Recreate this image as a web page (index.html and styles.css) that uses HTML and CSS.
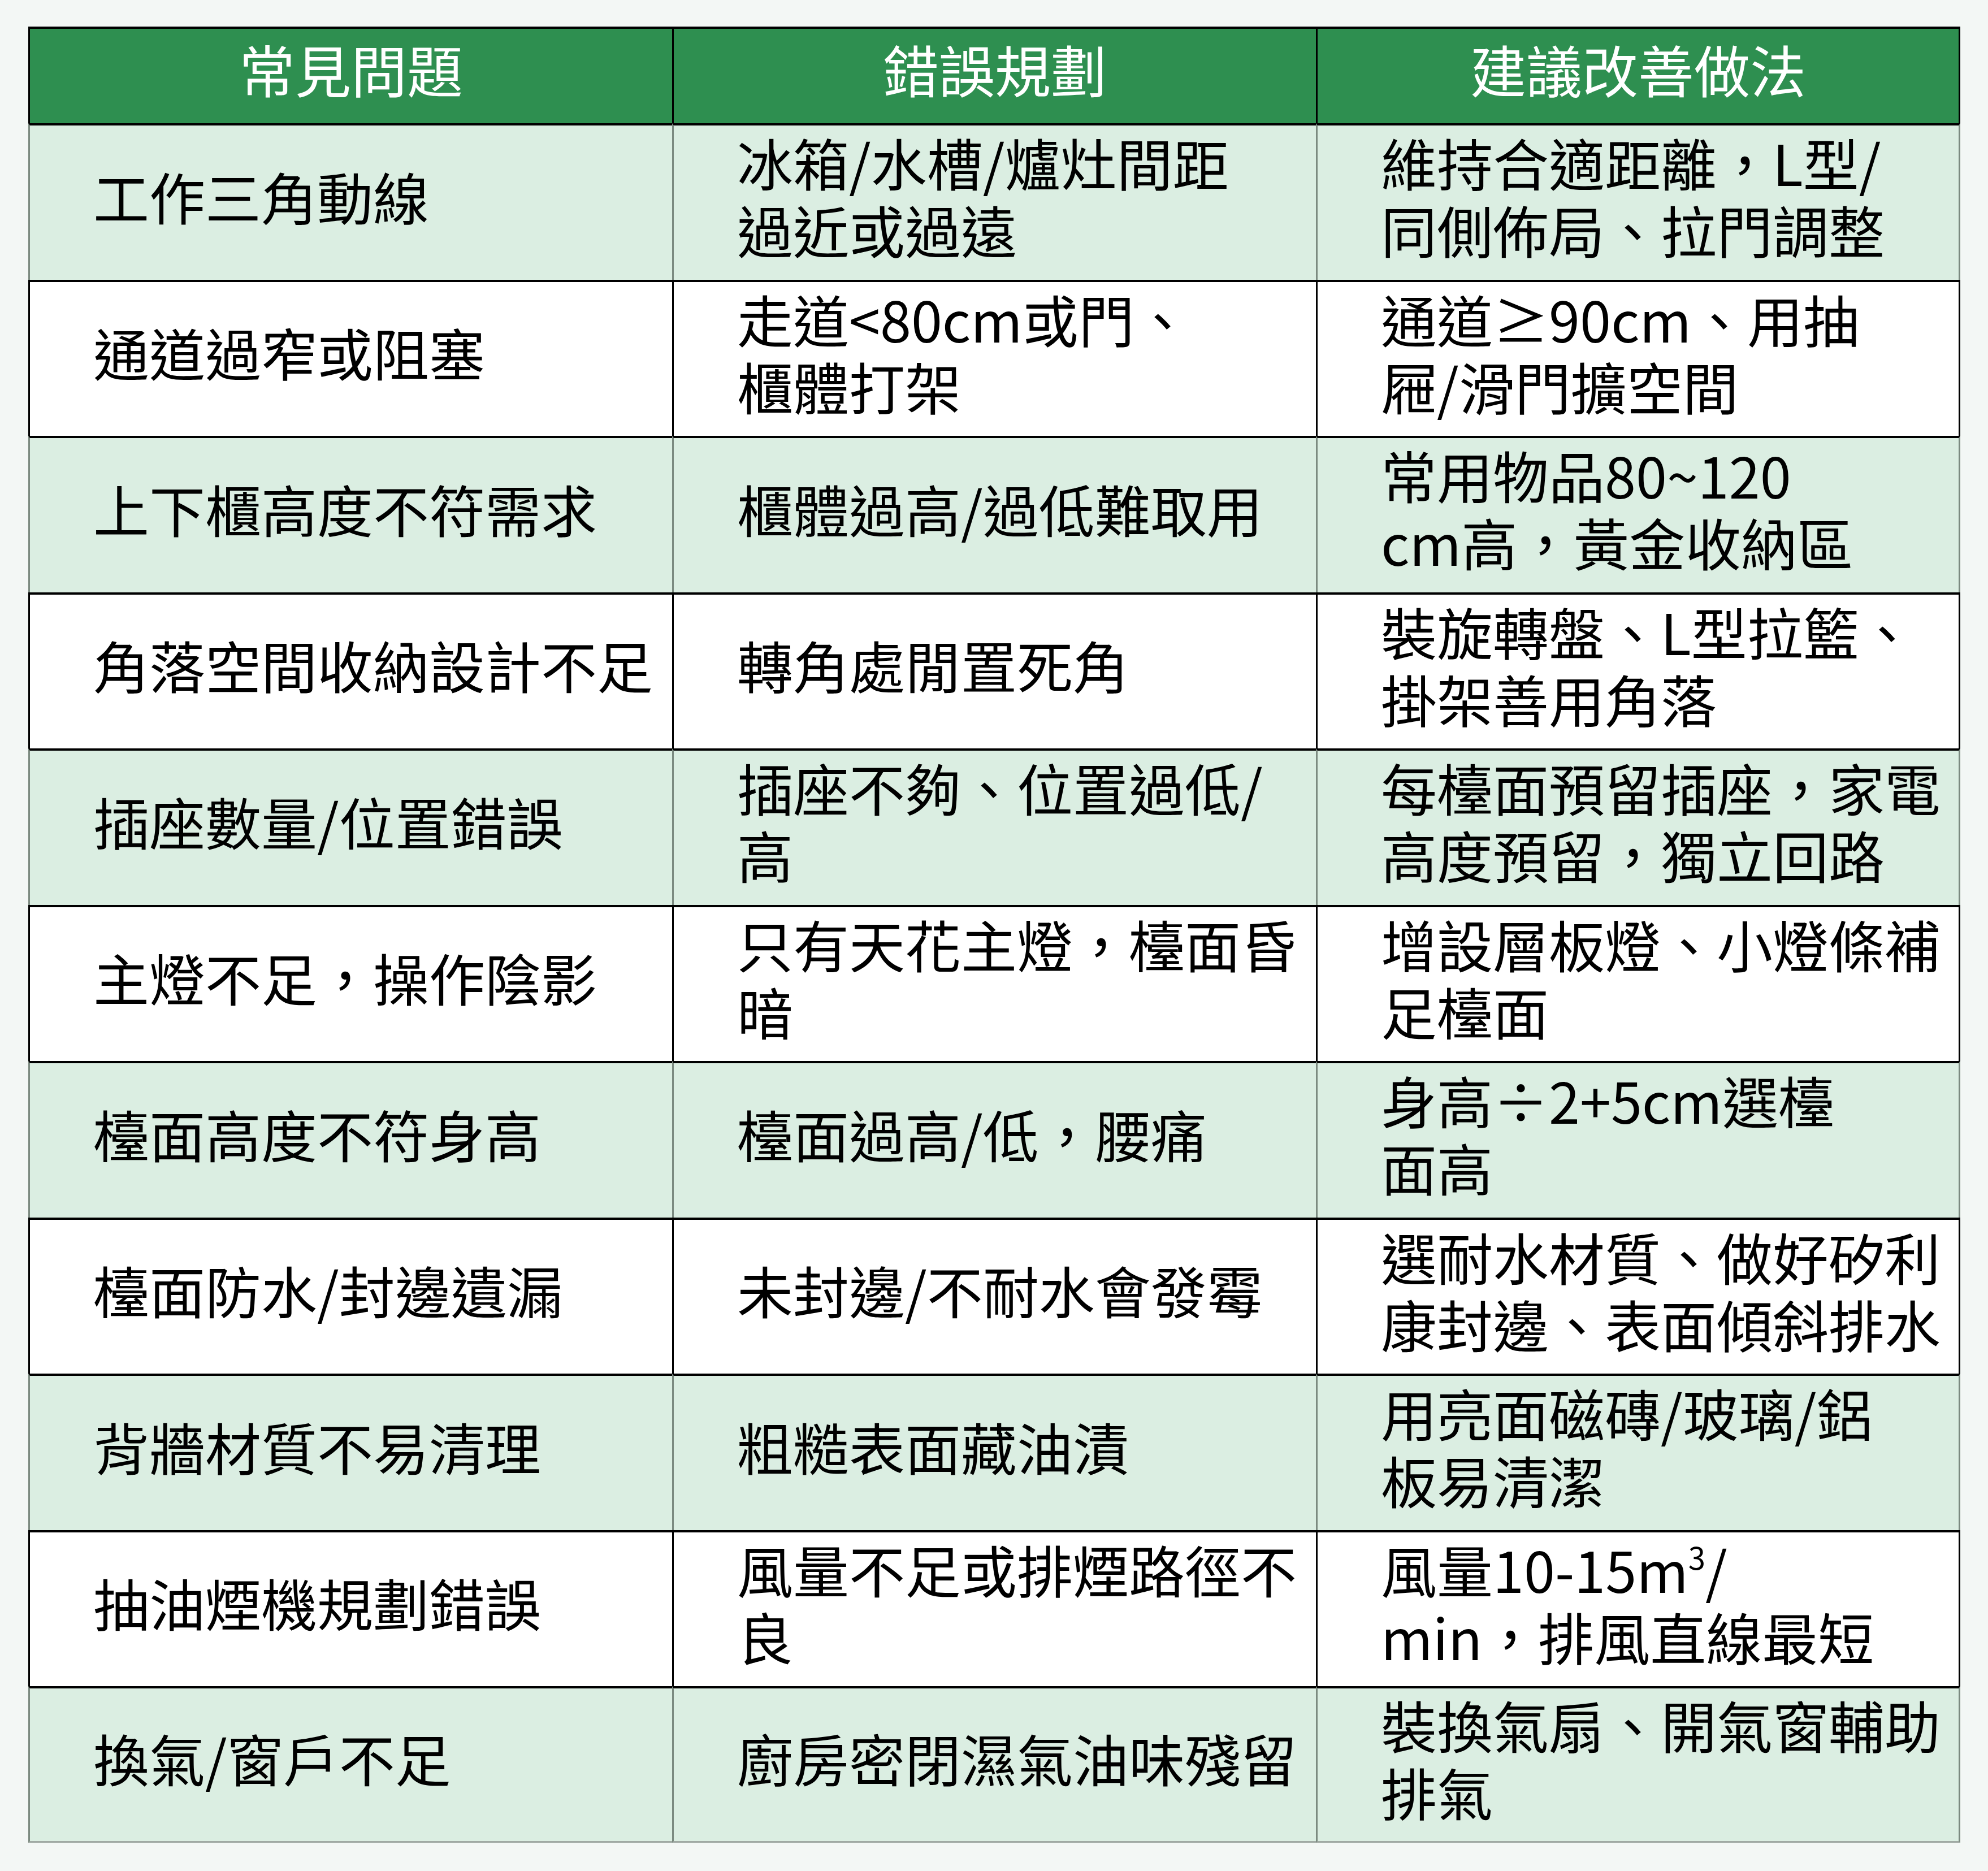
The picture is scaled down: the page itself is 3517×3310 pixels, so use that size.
FILE: index.html
```html
<!DOCTYPE html>
<html lang="zh-Hant">
<head>
<meta charset="utf-8">
<title>廚房規劃常見問題</title>
<link rel="stylesheet" href="styles.css">
</head>
<body>
<main class="page">
  <table class="guide">
    <colgroup>
      <col class="c1"><col class="c2"><col class="c3">
    </colgroup>
    <thead>
      <tr class="head">
        <th>常見問題</th>
        <th>錯誤規劃</th>
        <th>建議改善做法</th>
      </tr>
    </thead>
    <tbody>
      <tr class="tint">
        <td>工作三角動線</td>
        <td>冰箱/水槽/爐灶間距<br>過近或過遠</td>
        <td>維持合適距離，L型/<br>同側佈局、拉門調整</td>
      </tr>
      <tr class="plain">
        <td>通道過窄或阻塞</td>
        <td>走道&lt;80cm或門、<br>櫃體打架</td>
        <td>通道≥90cm、用抽<br>屜/滑門擴空間</td>
      </tr>
      <tr class="tint">
        <td>上下櫃高度不符需求</td>
        <td>櫃體過高/過低難取用</td>
        <td>常用物品80~120<br>cm高，黃金收納區</td>
      </tr>
      <tr class="plain">
        <td>角落空間收納設計不足</td>
        <td>轉角處閒置死角</td>
        <td>裝旋轉盤、L型拉籃、<br>掛架善用角落</td>
      </tr>
      <tr class="tint">
        <td>插座數量/位置錯誤</td>
        <td>插座不夠、位置過低/<br>高</td>
        <td>每檯面預留插座，家電<br>高度預留，獨立回路</td>
      </tr>
      <tr class="plain">
        <td>主燈不足，操作陰影</td>
        <td>只有天花主燈，檯面昏<br>暗</td>
        <td>增設層板燈、小燈條補<br>足檯面</td>
      </tr>
      <tr class="tint">
        <td>檯面高度不符身高</td>
        <td>檯面過高/低，腰痛</td>
        <td>身高÷2+5cm選檯<br>面高</td>
      </tr>
      <tr class="plain">
        <td>檯面防水/封邊遺漏</td>
        <td>未封邊/不耐水會發霉</td>
        <td>選耐水材質、做好矽利<br>康封邊、表面傾斜排水</td>
      </tr>
      <tr class="tint">
        <td>背牆材質不易清理</td>
        <td>粗糙表面藏油漬</td>
        <td>用亮面磁磚/玻璃/鋁<br>板易清潔</td>
      </tr>
      <tr class="plain">
        <td>抽油煙機規劃錯誤</td>
        <td>風量不足或排煙路徑不<br>良</td>
        <td>風量10-15m<sup class="sup">3</sup>/<br>min，排風直線最短</td>
      </tr>
      <tr class="tint last">
        <td>換氣/窗戶不足</td>
        <td>廚房密閉濕氣油味殘留</td>
        <td>裝換氣扇、開氣窗輔助<br>排氣</td>
      </tr>
    </tbody>
  </table>
</main>
</body>
</html>
```

FILE: styles.css
```css
html, body {
  margin: 0;
  padding: 0;
  background: #f3f7f5;
}

.page {
  padding: 47px 0 0 50px;
  font-family: "Noto Sans CJK TC", "Noto Sans", sans-serif;
}

.guide {
  width: 3418px;
  table-layout: fixed;
  border-collapse: separate;
  border-spacing: 0;
  font-size: 99px;
  line-height: 1.2;
  color: #000;
}

.c1 { width: 1139px; }
.c2 { width: 1139px; }
.c3 { width: 1140px; }

.guide th,
.guide td {
  border-top: 4px solid #000;
  border-left: 3px solid #000;
  white-space: nowrap;
  vertical-align: middle;
}

.guide th:last-child,
.guide td:last-child {
  border-right: 3px solid #000;
}

.head {
  height: 171px;
  background: #2e8f50;
}

.head th {
  color: #fff;
  font-weight: 400;
  text-align: center;
  padding: 0 0 26px 0;
}

.guide td {
  text-align: left;
  padding: 0 10px 24px 112px;
  font-weight: 400;
}

.tint,
.plain {
  height: 276.5px;
}

.tint { background: #dbeee2; }
.plain { background: #ffffff; }

.tint td,
.tint td:last-child {
  border-left-color: #7b8a80;
  border-right-color: #7b8a80;
}

.last td {
  border-bottom: 3px solid #a0aaa4;
}

.sup {
  font-size: 0.55em;
  line-height: 0;
  vertical-align: 0.75em;
}
```
